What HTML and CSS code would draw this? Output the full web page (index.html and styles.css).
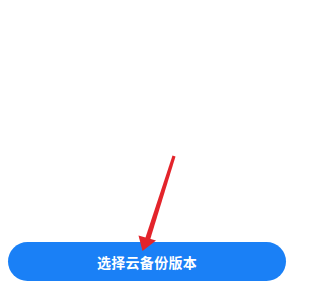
FILE: index.html
```html
<!DOCTYPE html>
<html lang="zh">
<head>
<meta charset="utf-8">
<link rel="stylesheet" href="styles.css">
</head>
<body>
<div class="page">
  <button class="cta">选择云备份版本</button>
  <svg class="arrow" width="302" height="287" viewBox="0 0 302 287">
    <polygon points="172.5,155.5 175.5,156.5 150,240 145,239" fill="#e3242b"/>
    <polygon points="138.5,235.5 156,240.5 142.5,251" fill="#e3242b"/>
  </svg>
</div>
</body>
</html>
```
FILE: styles.css
```css
html, body {
  margin: 0;
  padding: 0;
  background: #ffffff;
}
.page {
  position: relative;
  width: 302px;
  height: 287px;
  box-sizing: border-box;
  display: flex;
  flex-direction: column;
  justify-content: flex-end;
  padding: 0 16px 6px 8px;
}
.cta {
  height: 39px;
  width: 100%;
  border: none;
  border-radius: 20px;
  background: #1a80f6;
  color: #ffffff;
  font-family: "Noto Sans CJK SC", "Noto Sans", sans-serif;
  font-size: 14px;
  font-weight: 700;
  letter-spacing: 0.3px;
  padding: 0;
}
.arrow {
  position: absolute;
  left: 0;
  top: 0;
  pointer-events: none;
}
```
